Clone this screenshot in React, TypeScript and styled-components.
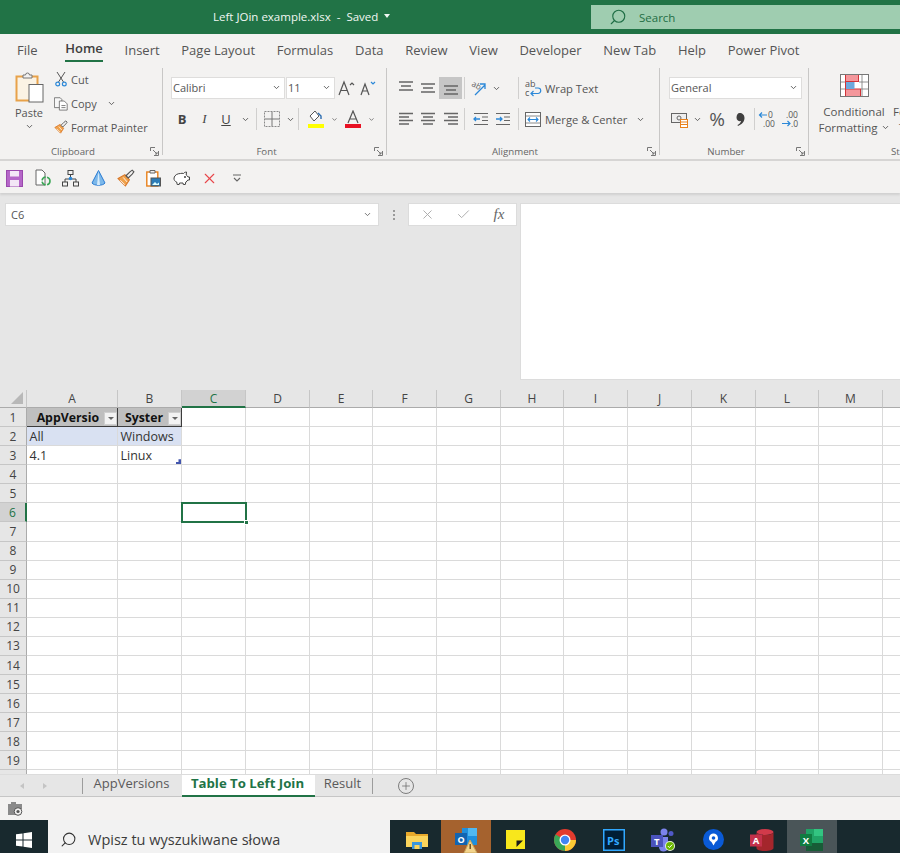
import React from "react";
import styled, { createGlobalStyle } from "styled-components";
import { ChevronDown, Check, Plus, X, Search } from "lucide-react";

const GlobalStyle = createGlobalStyle`
  html, body { margin: 0; padding: 0; background: #fff; }
  body { font-family: "Open Sans", "Noto Sans", sans-serif; color: #444; }
  * { box-sizing: border-box; }
`;

/* ---------- shell ---------- */
const Page = styled.div`
  width: 900px;
  height: 853px;
  display: flex;
  flex-direction: column;
  overflow: hidden;
`;

const TitleBar = styled.header`
  height: 34px;
  flex: none;
  background: #217346;
  display: flex;
  align-items: center;
  padding-left: 213px;
  color: #f1f7f3;
  font-size: 11.5px;
`;
const DocName = styled.span`
  white-space: pre;
  margin-bottom: 2px;
`;
const Caret = styled.span`
  width: 0;
  height: 0;
  margin: 0 0 2px 6px;
  border-left: 3.5px solid transparent;
  border-right: 3.5px solid transparent;
  border-top: 4px solid #f1f7f3;
`;
const SearchBox = styled.div`
  margin-left: auto;
  width: 309px;
  height: 24px;
  background: #9fcdb0;
  display: flex;
  align-items: center;
  gap: 12px;
  padding-left: 18px;
  color: #1f6e45;
  font-size: 11.5px;
`;
const MirrorSearch = styled(Search)`
  transform: scaleX(-1);
  flex: none;
`;

const TabBar = styled.nav`
  height: 34px;
  flex: none;
  background: #f3f2f1;
  display: flex;
  padding-left: 17px;
  gap: 21.7px;
`;
const Tab = styled.div<{ $active?: boolean }>`
  height: 29px;
  display: flex;
  align-items: center;
  padding-top: 2px;
  font-size: 13px;
  white-space: nowrap;
  color: #555;
  ${(p) => p.$active && `
    font-weight: 600;
    color: #3f3f3f;
    margin-left: 6px;
    border-bottom: 2px solid #217346;
    height: 28px;
  `}
`;

/* ---------- ribbon ---------- */
const Ribbon = styled.section`
  height: 93px;
  flex: none;
  background: #f3f2f1;
  display: flex;
  border-bottom: 2px solid #d6d5d4;
  overflow: hidden;
`;
const Group = styled.div<{ $w: number; $pad?: number; $last?: boolean }>`
  position: relative;
  flex: none;
  width: ${(p) => p.$w}px;
  height: 87px;
  padding-left: ${(p) => p.$pad ?? 0}px;
  ${(p) => !p.$last && "border-right: 1px solid #c8c7c6;"}
`;
const GroupLabel = styled.div`
  position: absolute;
  left: 0;
  right: 16px;
  bottom: -4px;
  height: 15px;
  text-align: center;
  font-size: 9.7px;
  line-height: 15px;
  color: #666;
`;
const Launcher = styled.span`
  position: absolute;
  right: 3px;
  bottom: -1px;
  display: flex;
`;
const Rows = styled.div`
  display: flex;
  flex-direction: column;
  gap: 9px;
  padding-top: 9px;
`;
const Row = styled.div`
  display: flex;
  align-items: center;
  height: 22px;
`;
const Select = styled.div<{ $w: number }>`
  width: ${(p) => p.$w}px;
  height: 22px;
  background: #fff;
  border: 1px solid #dedddc;
  display: flex;
  align-items: center;
  justify-content: space-between;
  padding: 0 3px 2px 1px;
  font-size: 11px;
  color: #555;
  margin-right: 1px;
`;
const Btn = styled.div<{ $w: number; $on?: boolean }>`
  flex: none;
  width: ${(p) => p.$w}px;
  height: 22px;
  display: flex;
  align-items: center;
  justify-content: center;
  background: ${(p) => (p.$on ? "#c6c6c6" : "transparent")};
`;
const VSep = styled.i`
  flex: none;
  width: 1px;
  height: 22px;
  margin: 0 2px;
  background: #d0cfce;
`;
const BtnText = styled.span`
  font-size: 11.2px;
  color: #555;
  white-space: nowrap;
`;
const BoldMark = styled.b`
  font-size: 13px;
`;
const ItalicMark = styled.i`
  font-size: 13px;
  font-family: "Liberation Serif", serif;
`;
const UnderMark = styled.u`
  font-size: 13px;
`;
const Percent = styled.span`
  font-size: 19px;
  color: #555;
`;

const ClipboardBody = styled.div`
  display: flex;
  padding: 4px 0 0 13px;
`;
const PasteColumn = styled.div`
  width: 32px;
  display: flex;
  flex-direction: column;
  align-items: center;
  font-size: 11px;
  color: #555;
  gap: 2px;
`;
const ClipColumn = styled.div`
  margin: -5px 0 0 9px;
  display: flex;
  flex-direction: column;
`;
const ClipRow = styled.div`
  height: 24px;
  display: flex;
  align-items: center;
  gap: 3px;
  font-size: 11px;
  color: #555;
`;
const BigButton = styled.div`
  padding: 6px 0 0 10px;
  display: flex;
  flex-direction: column;
  align-items: center;
  width: 80px;
  font-size: 11.5px;
  line-height: 16px;
  color: #555;
  gap: 7px;
`;
const BigText = styled.div`
  text-align: center;
  white-space: nowrap;
`;
const CutOff = styled.div`
  padding: 36px 0 0 2px;
  font-size: 11.5px;
  line-height: 16px;
  color: #555;
  white-space: pre;
`;
const CutLabel = styled.div`
  position: absolute;
  left: 82px;
  bottom: -4px;
  font-size: 9.7px;
  line-height: 15px;
  color: #666;
`;

/* ---------- quick access ---------- */
const Qat = styled.div`
  height: 32px;
  flex: none;
  background: #f3f2f1;
  display: flex;
  align-items: center;
  padding: 2px 0 0 1px;
  box-shadow: 0 2px 2px #d0d0d0;
  position: relative;
`;
const QatItem = styled.span`
  width: 27.8px;
  flex: none;
  display: flex;
  justify-content: center;
`;

/* ---------- formula region ---------- */
const FormulaRegion = styled.div`
  height: 197px;
  flex: none;
  background: #e6e6e6;
  display: flex;
  padding-top: 10px;
  padding-left: 5px;
`;
const NameBox = styled.div`
  width: 374px;
  height: 23px;
  background: #fff;
  border: 1px solid #dcdcdc;
  display: flex;
  align-items: center;
  justify-content: space-between;
  padding: 0 6px 0 5px;
  font-size: 11px;
  color: #555;
`;
const Dots = styled.div`
  width: 29px;
  height: 23px;
  display: flex;
  flex-direction: column;
  align-items: center;
  justify-content: center;
  gap: 2px;
  & > i { width: 2px; height: 2px; background: #9a9a9a; }
`;
const FxBox = styled.div`
  width: 109px;
  height: 23px;
  background: #fff;
  border: 1px solid #dcdcdc;
  display: flex;
  align-items: center;
`;
const Fx = styled.span`
  font-family: "Liberation Serif", serif;
  font-style: italic;
  font-size: 15px;
  color: #666;
`;
const FormulaInput = styled.div`
  margin-left: 3px;
  width: 380px;
  height: 177px;
  background: #fff;
  border: 1px solid #dcdcdc;
  border-right: 0;
`;

/* ---------- sheet ---------- */
const COLS = [
  { n: "A", w: 91 }, { n: "B", w: 64 }, { n: "C", w: 64 }, { n: "D", w: 64 }, { n: "E", w: 63 },
  { n: "F", w: 64 }, { n: "G", w: 64 }, { n: "H", w: 63 }, { n: "I", w: 64 }, { n: "J", w: 64 },
  { n: "K", w: 64 }, { n: "L", w: 63 }, { n: "M", w: 64 }, { n: "", w: 18 },
];

const Sheet = styled.div`
  height: 384px;
  flex: none;
  overflow: hidden;
  background: #fff;
  display: grid;
  grid-template-columns: 27px ${COLS.map((c) => c.w + "px").join(" ")};
  grid-template-rows: 18px repeat(20, 19.08px);
`;
const Corner = styled.div`
  background: #e6e6e6;
  border-right: 1px solid #c6c6c6;
  border-bottom: 1px solid #ababab;
  position: relative;
  &::after {
    content: "";
    position: absolute;
    right: 3px;
    bottom: 3px;
    border-style: solid;
    border-width: 0 0 12px 12px;
    border-color: transparent transparent #b8b8b8 transparent;
  }
`;
const ColHead = styled.div<{ $sel?: boolean }>`
  background: ${(p) => (p.$sel ? "#d2d2d2" : "#e6e6e6")};
  color: ${(p) => (p.$sel ? "#217346" : "#444")};
  border-right: 1px solid #c6c6c6;
  border-bottom: ${(p) => (p.$sel ? "2px solid #217346" : "1px solid #ababab")};
  display: flex;
  align-items: center;
  justify-content: center;
  font-size: 12px;
`;
const RowHead = styled.div<{ $sel?: boolean }>`
  background: ${(p) => (p.$sel ? "#d2d2d2" : "#e6e6e6")};
  color: ${(p) => (p.$sel ? "#217346" : "#444")};
  border-right: ${(p) => (p.$sel ? "2px solid #217346" : "1px solid #ababab")};
  border-bottom: 1px solid #c6c6c6;
  display: flex;
  align-items: center;
  justify-content: center;
  font-size: 12px;
`;
const Cell = styled.div<{ $kind?: "head" | "band"; $sel?: boolean }>`
  position: relative;
  border-right: 1px solid #dadada;
  border-bottom: 1px solid #dadada;
  padding: 1px 0 0 2.5px;
  display: flex;
  align-items: center;
  font-size: 12.5px;
  white-space: nowrap;
  overflow: ${(p) => (p.$sel ? "visible" : "hidden")};
  color: #333;
  ${(p) => p.$kind === "head" && `
    background: #bfbfbf;
    border-right: 1px solid #3c3c3c;
    border-bottom: 1px solid #3c3c3c;
    font-size: 12.3px;
    font-weight: 700;
    color: #111;
    justify-content: flex-end;
    padding-right: 18px;
  `}
  ${(p) => p.$kind === "band" && "background: #d9e1f2;"}
  ${(p) => p.$sel && `
    outline: 2px solid #217346;
    outline-offset: -1px;
    z-index: 2;
  `}
`;
const FilterBtn = styled.span`
  position: absolute;
  right: 0;
  top: 4px;
  width: 13px;
  height: 13px;
  background: #f3f3f3;
  border: 1px solid #d0d0d0;
  display: flex;
  align-items: center;
  justify-content: center;
  &::after {
    content: "";
    border-left: 3px solid transparent;
    border-right: 3px solid transparent;
    border-top: 3px solid #666;
  }
`;
const ResizeMark = styled.span`
  position: absolute;
  right: 0;
  bottom: 0;
  width: 5px;
  height: 5px;
  background: #4356ad;
  clip-path: polygon(100% 0, 100% 100%, 0 100%, 0 55%, 50% 55%, 50% 0);
`;
const FillHandle = styled.span`
  position: absolute;
  right: -4px;
  bottom: -4px;
  box-sizing: content-box;
  width: 3px;
  height: 3px;
  background: #217346;
  border: 1px solid #fff;
`;

/* ---------- tabs + status ---------- */
const SheetTabs = styled.div`
  height: 23px;
  flex: none;
  background: #e6e6e6;
  border-bottom: 1px solid #c6c6c6;
  border-top: 1px solid #dcdcdc;
  display: flex;
  align-items: stretch;
  padding-left: 20px;
`;
const Arrow = styled.span<{ $dir: "l" | "r" }>`
  align-self: center;
  width: 0;
  height: 0;
  margin-right: 19px;
  border-top: 3.5px solid transparent;
  border-bottom: 3.5px solid transparent;
  ${(p) => (p.$dir === "l" ? "border-right: 4px solid #c4c4c4;" : "border-left: 4px solid #c4c4c4;")}
`;
const TabDivider = styled.i<{ $gap?: number }>`
  align-self: center;
  width: 1px;
  height: 16px;
  margin-left: ${(p) => p.$gap ?? 0}px;
  background: #9c9c9c;
`;
const SheetTab = styled.div<{ $active?: boolean; $w: number }>`
  width: ${(p) => p.$w}px;
  display: flex;
  align-items: center;
  justify-content: center;
  padding: 0 2px 5px 0;
  font-size: 13px;
  white-space: nowrap;
  color: #5a5a5a;
  ${(p) => p.$active && `
    background: #fff;
    color: #217346;
    font-size: 13.2px;
    font-weight: 700;
    border-bottom: 2px solid #217346;
    margin-bottom: -1px;
    padding-bottom: 4px;
  `}
`;
const AddSheet = styled.span`
  align-self: center;
  margin-left: 25px;
  width: 16px;
  height: 16px;
  border: 1px solid #7d7d7d;
  border-radius: 50%;
  display: flex;
  align-items: center;
  justify-content: center;
  color: #6a6a6a;
`;
const StatusBar = styled.div`
  height: 23px;
  flex: none;
  background: #f3f2f1;
  display: flex;
  align-items: center;
  padding-left: 8px;
`;

/* ---------- windows taskbar ---------- */
const Taskbar = styled.footer`
  height: 33px;
  flex: none;
  background: #18292e;
  display: flex;
  align-items: stretch;
`;
const StartBtn = styled.div`
  width: 48px;
  padding-top: 6px;
  display: flex;
  align-items: center;
  justify-content: center;
`;
const WinSearch = styled.div`
  width: 342px;
  background: #f2f2f2;
  display: flex;
  align-items: center;
  padding: 6px 0 0 12px;
  gap: 11px;
  font-size: 14.5px;
  color: #3c3c3c;
`;
const TaskItem = styled.div<{ $bg?: string }>`
  width: 49.4px;
  flex: none;
  padding-top: 6px;
  display: flex;
  align-items: center;
  justify-content: center;
  background: ${(p) => p.$bg ?? "transparent"};
`;
const TaskList = styled.div`
  display: flex;
  padding-left: 2px;
`;

/* ---------- icons ---------- */
const Chev = ({ s = 9, c = "#555" }: { s?: number; c?: string }) => (
  <ChevronDown size={s} color={c} strokeWidth={2.4} />
);
const LauncherIcon = () => (
  <svg width="9" height="9" viewBox="0 0 9 9" fill="none" stroke="#777">
    <path d="M8.5 4V8.5H4M.5 4V.5H5M3 3l4 4M7 5v2H5" />
  </svg>
);
const AlignV = ({ y }: { y: number }) => (
  <svg width="16" height="16" viewBox="0 0 16 16" stroke="#666" strokeWidth="1.3">
    <path d={`M1 ${y}h14M3 ${y + 4}h10M1 ${y + 8}h14`} />
  </svg>
);
const AlignH = ({ a }: { a: "l" | "c" | "r" }) => {
  const x = (w: number) => (a === "l" ? 1 : a === "c" ? (16 - w) / 2 : 15 - w);
  return (
    <svg width="16" height="14" viewBox="0 0 16 14" stroke="#666" strokeWidth="1.3">
      <path d={`M1 1.5h14M${x(10)} 5h10M1 8.5h14M${x(10)} 12h10`} />
    </svg>
  );
};
const Indent = ({ flip }: { flip?: boolean }) => (
  <svg width="16" height="14" viewBox="0 0 16 14" fill="none">
    <path d="M1 1.5h14M9 5h6M9 8.5h6M1 12.5h14" stroke="#666" strokeWidth="1.2" />
    <path d={flip ? "M1 7h6M5 5l2 2-2 2" : "M7 7H1M3 5 1 7l2 2"} stroke="#2b88d8" strokeWidth="1.3" />
  </svg>
);
const PasteIcon = () => (
  <svg width="29" height="31" viewBox="0 0 29 31" fill="none">
    <rect x="1.5" y="4.5" width="21" height="24" fill="#fbf3e4" stroke="#e8a24a" strokeWidth="2" />
    <path d="M8 5V3h2.5a2 2 0 0 1 4 0H17v3H8z" fill="#f3f2f1" stroke="#777" />
    <rect x="14" y="12.5" width="14" height="17.5" fill="#fff" stroke="#666" />
  </svg>
);
const CutIcon = () => (
  <svg width="12" height="16" viewBox="0 0 12 16" fill="none">
    <path d="M2 1l6.5 10M10 1 3.5 11" stroke="#555" />
    <circle cx="2.7" cy="13" r="1.9" stroke="#2b88d8" strokeWidth="1.2" />
    <circle cx="9.3" cy="13" r="1.9" stroke="#2b88d8" strokeWidth="1.2" />
  </svg>
);
const CopyIcon = () => (
  <svg width="17" height="17" viewBox="0 0 17 17" fill="#f7f7f7" stroke="#666">
    <path d="M.5 1.500h7l2 2v10h-9z" />
    <path d="M6.500 5.500h6l3.500 3.500v7.500H6.500z" fill="#fff" />
    <path d="M9 11h5M9 13.500h5" />
  </svg>
);
const BrushIcon = ({ s = 16 }: { s?: number }) => (
  <svg width={s} height={s} viewBox="0 0 16 16" fill="none">
    <path d="M1 8.500 7 5l4 4.500-3.500 5.500z" fill="#f0a14a" stroke="#d9782a" />
    <path d="M3 10l4 4M5.500 7.500l3.500 4" stroke="#fff" strokeWidth=".8" />
    <path d="m8 6 3.500-3.500 2-1.500 1.500 1.500-1.500 2L10 8z" fill="#f3f2f1" stroke="#555" />
  </svg>
);
const ABtn = ({ up }: { up: boolean }) => (
  <svg width="17" height="16" viewBox="0 0 17 16" fill="none">
    <path d={up ? "M1 15 6 2l5 13M3 10.500h6" : "M2 15 6 4l4 11M3.600 11h5"} stroke="#555" strokeWidth="1.2" />
    <path d={up ? "m12 5 2-2 2 2" : "m12 2 2 2 2-2"} stroke={up ? "#555" : "#2b88d8"} strokeWidth="1.2" />
  </svg>
);
const BorderIcon = () => (
  <svg width="16" height="16" viewBox="0 0 16 16" fill="none" stroke="#8a8a8a">
    <rect x=".5" y=".5" width="15" height="15" strokeDasharray="2 1" />
    <path d="M8 1v14M1 8h14" stroke="#777" />
  </svg>
);
const FillIcon = () => (
  <svg width="18" height="18" viewBox="0 0 18 18" fill="none">
    <path d="M8 1 3 6l4 5 5-5z" fill="#fff" stroke="#555" />
    <path d="M11 3l3 3v3" stroke="#2b6cb0" strokeWidth="1.4" />
    <rect x="1" y="14" width="16" height="4" fill="#ffff00" />
  </svg>
);
const ColorA = () => (
  <svg width="18" height="18" viewBox="0 0 18 18" fill="none">
    <path d="M4 13 9 1l5 12M6 9h6" stroke="#555" strokeWidth="1.2" />
    <rect x="1" y="14" width="16" height="4" fill="#e81123" />
  </svg>
);
const OrientIcon = () => (
  <svg width="20" height="18" viewBox="0 0 20 18" fill="none">
    <text x="3" y="9" fontSize="8" fill="#666" fontFamily="Open Sans" transform="rotate(30 7 6)">ab</text>
    <path d="m6 16 10-10M11 5h5v5" stroke="#2b88d8" strokeWidth="1.3" />
  </svg>
);
const WrapIcon = () => (
  <svg width="18" height="20" viewBox="0 0 18 20" fill="none">
    <text x="1" y="9" fontSize="9" fill="#555" fontFamily="Open Sans">ab</text>
    <text x="1" y="18" fontSize="9" fill="#555" fontFamily="Open Sans">c</text>
    <path d="M11 10h3a2.500 2.500 0 0 1 0 5.500H7M9.500 13 7 15.500 9.500 18" stroke="#2b88d8" strokeWidth="1.2" />
  </svg>
);
const MergeIcon = () => (
  <svg width="16" height="15" viewBox="0 0 16 15" fill="none">
    <rect x=".5" y=".5" width="15" height="14" fill="#fff" stroke="#666" />
    <path d="M1 4h14M1 11h14" stroke="#888" />
    <path d="M3 7.500h10M5 5.500 3 7.500l2 2M11 5.500l2 2-2 2" stroke="#2b88d8" strokeWidth="1.1" />
  </svg>
);
const CurrencyIcon = () => (
  <svg width="17" height="17" viewBox="0 0 17 17" fill="none">
    <rect x=".5" y="2.500" width="15" height="9" fill="#eee" stroke="#666" />
    <circle cx="8" cy="7" r="2" stroke="#666" />
    <rect x="9.500" y="8.500" width="7" height="8" fill="#fff" stroke="#e8801a" />
    <path d="M9.500 11h7M9.500 13.500h7" stroke="#e8801a" />
  </svg>
);
const CommaIcon = () => (
  <svg width="9" height="13" viewBox="0 0 9 13">
    <path d="M3.500 0C6.500 0 8.500 2 8.500 5c0 3.500-2.500 6.500-6.500 8l-.5-1c2-1 3.300-2.500 3.500-4-1.500.5-4.500 0-4.500-3.500C.5 2 2 0 3.500 0z" fill="#3f3f3f" />
  </svg>
);
const Decimal = ({ inc }: { inc?: boolean }) => (
  <svg width="20" height="20" viewBox="0 0 20 20" fill="none">
    <text x={inc ? 5 : 10} y="9" fontSize="8.500" fill="#555" fontFamily="Open Sans">{inc ? ".00" : "0"}</text>
    <text x={inc ? 10 : 5} y="18" fontSize="8.500" fill="#555" fontFamily="Open Sans">{inc ? ".0" : ".00"}</text>
    <path d={inc ? "M1 14.500h8M6.500 12 9 14.500 6.500 17" : "M1 6h8M4 3.500 1.500 6 4 8.500"} stroke="#2b88d8" strokeWidth="1.2" />
  </svg>
);
const CondIcon = () => (
  <svg width="29" height="23" viewBox="0 0 29 23" fill="none">
    <rect x=".5" y=".5" width="28" height="22" fill="#fff" />
    <rect x="5.500" y=".5" width="13" height="7" fill="#f4979c" stroke="#d13438" />
    <rect x="5.500" y="15" width="15" height="7.500" fill="#f4979c" stroke="#d13438" />
    <rect x="5.500" y="8" width="9" height="7" fill="#6ea8dc" />
    <path d="M5.500 8v7" stroke="#d13438" />
    <rect x=".5" y=".5" width="28" height="22" stroke="#777" />
    <path d="M1 8h4M19 8h9M1 15h4M21 15h7M22 1v21" stroke="#777" strokeWidth=".8" />
  </svg>
);

/* quick access icons */
const SaveIcon = () => (
  <svg width="17" height="17" viewBox="0 0 17 17">
    <rect x=".5" y=".5" width="16" height="16" fill="#b566c8" stroke="#9a49ad" />
    <rect x="4" y="1" width="9" height="5.500" fill="#f3e6f6" />
    <rect x="4" y="10" width="9" height="6.500" fill="#f3e6f6" />
  </svg>
);
const RefreshDoc = () => (
  <svg width="16" height="18" viewBox="0 0 16 18" fill="none">
    <path d="M1 1h6l3 3v12H1z" fill="#fff" stroke="#666" />
    <circle cx="11" cy="12" r="4" stroke="#3aa655" strokeWidth="1.6" strokeDasharray="5 1.500" />
  </svg>
);
const OrgIcon = () => (
  <svg width="17" height="17" viewBox="0 0 17 17" fill="none" stroke="#444">
    <rect x="6" y=".5" width="5" height="4" />
    <rect x=".5" y="12" width="5" height="4" />
    <rect x="11.500" y="12" width="5" height="4" />
    <path d="M8.500 5v4M3 12V9h11v3" />
    <circle cx="8.500" cy="8.500" r="1.800" fill="#2b88d8" stroke="none" />
  </svg>
);
const ConeIcon = () => (
  <svg width="15" height="16" viewBox="0 0 15 16">
    <path d="M7.500 .5 14 13c-2 3-11 3-13 0z" fill="#7cb8ea" stroke="#2b7cd3" />
    <path d="M7.500 1 9 15H6z" fill="#d7ebfa" />
  </svg>
);
const PasteImg = () => (
  <svg width="15" height="18" viewBox="0 0 15 18" fill="none">
    <rect x=".8" y="3" width="11" height="14" fill="#fff" stroke="#e8801a" strokeWidth="1.4" />
    <path d="M4 4V1.500h5V4z" fill="#f3f2f1" stroke="#666" />
    <rect x="5" y="9" width="9.500" height="8" fill="#2b7cb8" stroke="#555" />
    <path d="m6 16 3-3 2 2 2-1.500V16z" fill="#dff" />
  </svg>
);
const PigIcon = () => (
  <svg width="17" height="15" viewBox="0 0 17 15" fill="none" stroke="#444">
    <path d="M1 7c.5-3 3.500-4.500 6.500-4.500 1-.3 2-.3 3 0 .7-1 2-1.500 3-1.500l-.3 3c1 .6 1.500 1.300 1.800 2h1.500v3h-1.700c-.4.800-1 1.500-2 2l-.5 2.500h-2l-.3-1.500H6.500l-.3 1.500h-2l-.5-2.500C2 10.500.8 9 1 7z" fill="#fff" />
    <circle cx="12" cy="6" r=".6" fill="#444" />
  </svg>
);
const OverflowIcon = () => (
  <svg width="10" height="9" viewBox="0 0 10 9" fill="none" stroke="#666" strokeWidth="1.1">
    <path d="M1 1h8M2 4l3 3 3-3" />
  </svg>
);

/* taskbar icons */
const WinLogo = () => (
  <svg width="16" height="16" viewBox="0 0 16 16" fill="#fff">
    <path d="M0 2.300 6.500 1.400V7.500H0zM7.500 1.300 16 0V7.500H7.500zM0 8.500h6.500v6.100L0 13.700zM7.500 8.500H16V16l-8.500-1.300z" />
  </svg>
);
const FolderIcon = () => (
  <svg width="22" height="18" viewBox="0 0 22 18">
    <path d="M0 1h8l2 2h12v13H0z" fill="#e8a92c" />
    <rect y="5" width="22" height="11" fill="#fbd45c" />
    <rect x="6" y="11" width="10" height="7" fill="#3a96dd" />
    <rect x="8.500" y="14" width="5" height="4" fill="#fbd45c" />
  </svg>
);
const OutlookIcon = () => (
  <svg width="24" height="26" viewBox="0 0 24 26">
    <rect x="8" y="1" width="15" height="17" fill="#1f8fdc" />
    <rect x="14" y="1" width="9" height="8" fill="#50b8f0" />
    <rect x="1" y="6" width="12" height="12" fill="#1264b0" />
    <text x="3.500" y="15.500" fontSize="9" fill="#fff" fontFamily="Open Sans" fontWeight="700">O</text>
    <path d="M16 13l7 13H10z" fill="#f3d48c" stroke="#c9a45a" />
    <rect x="15.500" y="17" width="1.400" height="5" fill="#6b4a16" />
  </svg>
);
const StickyIcon = () => (
  <svg width="19" height="19" viewBox="0 0 19 19">
    <rect width="19" height="19" fill="#f8e71c" />
    <path d="M17 10.500 10.500 17v-6.500z" fill="#1a1a1a" />
  </svg>
);
const ChromeIcon = () => (
  <svg width="22" height="22" viewBox="0 0 22 22">
    <circle cx="11" cy="11" r="11" fill="#e33b2e" />
    <path d="M11 11h11a11 11 0 0 1-11 11z" fill="#fcc934" />
    <path d="M11 11 1.500 5.500A11 11 0 0 0 11 22z" fill="#3aa757" />
    <circle cx="11" cy="11" r="5.500" fill="#fff" />
    <circle cx="11" cy="11" r="4.200" fill="#4285f4" />
  </svg>
);
const PsIcon = () => (
  <svg width="22" height="22" viewBox="0 0 22 22">
    <rect x=".75" y=".75" width="20.500" height="20.500" fill="#001e36" stroke="#31a8ff" strokeWidth="1.500" />
    <text x="4" y="15.500" fontSize="11" fontWeight="700" fill="#31a8ff" fontFamily="Open Sans">Ps</text>
  </svg>
);
const TeamsIcon = () => (
  <svg width="25" height="24" viewBox="0 0 25 24">
    <circle cx="13" cy="4" r="3.500" fill="#7b83eb" />
    <circle cx="20" cy="5.500" r="2.500" fill="#5059c9" />
    <path d="M8 9h9v10a4 4 0 0 1-9 0z" fill="#7b83eb" />
    <rect y="7" width="12" height="12" fill="#4b53bc" />
    <text x="3" y="16.500" fontSize="9.500" fontWeight="700" fill="#fff" fontFamily="Open Sans">T</text>
    <circle cx="19" cy="18" r="5" fill="#e6f4d7" />
    <circle cx="19" cy="18" r="4" fill="#6bb700" />
    <path d="m16.800 18 1.600 1.600 2.800-3" stroke="#fff" fill="none" />
  </svg>
);
const MapsIcon = () => (
  <svg width="21" height="21" viewBox="0 0 21 21">
    <circle cx="10.500" cy="10.500" r="10.500" fill="#0a5ad6" />
    <path d="M10.500 4.500a4.500 4.500 0 0 0-2 8.500l2 3.500 2-3.500a4.500 4.500 0 0 0-2-8.500z" fill="#fff" />
    <circle cx="10.500" cy="9" r="1.800" fill="#0a5ad6" />
  </svg>
);
const AccessIcon = () => (
  <svg width="24" height="24" viewBox="0 0 24 24">
    <ellipse cx="15" cy="4" rx="8.500" ry="3" fill="#d13a4a" />
    <path d="M6.500 4v16c0 4 17 4 17 0V4c0 4-17 4-17 0z" fill="#a4262c" />
    <rect y="6.500" width="12" height="12" fill="#c4314b" />
    <text x="2.800" y="16" fontSize="9.500" fontWeight="700" fill="#fff" fontFamily="Open Sans">A</text>
  </svg>
);
const ExcelIcon = () => (
  <svg width="23" height="22" viewBox="0 0 23 22">
    <rect x="6" y="0" width="17" height="22" fill="#21a366" />
    <rect x="14" y="0" width="9" height="7" fill="#33c481" />
    <rect x="6" y="14" width="17" height="8" fill="#185c37" />
    <rect x="0" y="5" width="12" height="12" fill="#107c41" />
    <text x="2.800" y="14.500" fontSize="9.500" fontWeight="700" fill="#fff" fontFamily="Open Sans">X</text>
  </svg>
);
const CameraIcon = () => (
  <svg width="15" height="14" viewBox="0 0 15 14" fill="none">
    <path d="M0 2h3V0h5v2h6v5H8v6H0z" fill="#8a8a8a" />
    <circle cx="10" cy="9.500" r="3.800" fill="#f3f2f1" stroke="#555" />
    <circle cx="10" cy="9.500" r="1.600" fill="#555" />
  </svg>
);

const cellText: Record<string, string> = { A2: "All", B2: "Windows", A3: "4.1", B3: "Linux" };

export default function App() {
  return (
    <Page>
      <GlobalStyle />
      <TitleBar>
        <DocName>Left JOin example.xlsx  -  Saved</DocName>
        <Caret />
        <SearchBox>
          <MirrorSearch size={18} color="#1f6e45" strokeWidth={1.5} />
          Search
        </SearchBox>
      </TitleBar>

      <TabBar>
        {["File", "Home", "Insert", "Page Layout", "Formulas", "Data", "Review", "View", "Developer", "New Tab", "Help", "Power Pivot"].map((t) => (
          <Tab key={t} $active={t === "Home"}>{t}</Tab>
        ))}
      </TabBar>

      <Ribbon>
        <Group $w={163}>
          <ClipboardBody>
            <PasteColumn>
              <PasteIcon />
              <span>Paste</span>
              <Chev />
            </PasteColumn>
            <ClipColumn>
              <ClipRow><Btn $w={14}><CutIcon /></Btn>Cut</ClipRow>
              <ClipRow>
                <Btn $w={14}><CopyIcon /></Btn>Copy<Btn $w={24}><Chev /></Btn>
              </ClipRow>
              <ClipRow><Btn $w={14}><BrushIcon /></Btn>Format Painter</ClipRow>
            </ClipColumn>
          </ClipboardBody>
          <GroupLabel>Clipboard</GroupLabel>
          <Launcher><LauncherIcon /></Launcher>
        </Group>

        <Group $w={224} $pad={8}>
          <Rows>
            <Row>
              <Select $w={114}>Calibri<Chev /></Select>
              <Select $w={49}>11<Chev /></Select>
              <Btn $w={20}><ABtn up /></Btn>
              <Btn $w={22}><ABtn up={false} /></Btn>
            </Row>
            <Row>
              <Btn $w={22}><BoldMark>B</BoldMark></Btn>
              <Btn $w={23}><ItalicMark>I</ItalicMark></Btn>
              <Btn $w={20}><UnderMark>U</UnderMark></Btn>
              <Btn $w={18}><Chev /></Btn>
              <VSep />
              <Btn $w={25}><BorderIcon /></Btn>
              <Btn $w={12}><Chev /></Btn>
              <VSep />
              <Btn $w={30}><FillIcon /></Btn>
              <Btn $w={7}><Chev /></Btn>
              <Btn $w={30}><ColorA /></Btn>
              <Btn $w={7}><Chev /></Btn>
            </Row>
          </Rows>
          <GroupLabel>Font</GroupLabel>
          <Launcher><LauncherIcon /></Launcher>
        </Group>

        <Group $w={273} $pad={8}>
          <Rows>
            <Row>
              <Btn $w={22}><AlignV y={2} /></Btn>
              <Btn $w={22}><AlignV y={4} /></Btn>
              <Btn $w={23} $on><AlignV y={6} /></Btn>
              <VSep />
              <Btn $w={24}><OrientIcon /></Btn>
              <Btn $w={11}><Chev /></Btn>
              <Btn $w={14} />
              <VSep />
              <Btn $w={24}><WrapIcon /></Btn>
              <BtnText>Wrap Text</BtnText>
            </Row>
            <Row>
              <Btn $w={22}><AlignH a="l" /></Btn>
              <Btn $w={22}><AlignH a="c" /></Btn>
              <Btn $w={23}><AlignH a="r" /></Btn>
              <VSep />
              <Btn $w={28}><Indent /></Btn>
              <Btn $w={16}><Indent flip /></Btn>
              <Btn $w={5} />
              <VSep />
              <Btn $w={24}><MergeIcon /></Btn>
              <BtnText>Merge &amp; Center</BtnText>
              <Btn $w={26}><Chev /></Btn>
            </Row>
          </Rows>
          <GroupLabel>Alignment</GroupLabel>
          <Launcher><LauncherIcon /></Launcher>
        </Group>

        <Group $w={149} $pad={9}>
          <Rows>
            <Row><Select $w={133}>General<Chev /></Select></Row>
            <Row>
              <Btn $w={20}><CurrencyIcon /></Btn>
              <Btn $w={16}><Chev /></Btn>
              <Btn $w={24}><Percent>%</Percent></Btn>
              <Btn $w={23}><CommaIcon /></Btn>
              <VSep />
              <Btn $w={22}><Decimal /></Btn>
              <Btn $w={23}><Decimal inc /></Btn>
            </Row>
          </Rows>
          <GroupLabel>Number</GroupLabel>
          <Launcher><LauncherIcon /></Launcher>
        </Group>

        <Group $w={82} $last>
          <BigButton>
            <CondIcon />
            <BigText>Conditional<br />Formatting <Chev /></BigText>
          </BigButton>
          <CutLabel>St</CutLabel>
        </Group>
        <CutOff>{"Fo\n  T"}</CutOff>
      </Ribbon>

      <Qat>
        <QatItem><SaveIcon /></QatItem>
        <QatItem><RefreshDoc /></QatItem>
        <QatItem><OrgIcon /></QatItem>
        <QatItem><ConeIcon /></QatItem>
        <QatItem><BrushIcon s={18} /></QatItem>
        <QatItem><PasteImg /></QatItem>
        <QatItem><PigIcon /></QatItem>
        <QatItem><X size={17} color="#e8464a" strokeWidth={1.5} /></QatItem>
        <QatItem><OverflowIcon /></QatItem>
      </Qat>

      <FormulaRegion>
        <NameBox>C6<Chev c="#666" /></NameBox>
        <Dots><i /><i /><i /></Dots>
        <FxBox>
          <Btn $w={36}><X size={15} color="#aaa" strokeWidth={1.5} /></Btn>
          <Btn $w={36}><Check size={15} color="#aaa" strokeWidth={1.5} /></Btn>
          <Btn $w={36}><Fx>fx</Fx></Btn>
        </FxBox>
        <FormulaInput />
      </FormulaRegion>

      <Sheet>
        <Corner />
        {COLS.map((c, i) => (
          <ColHead key={i} $sel={c.n === "C"}>{c.n}</ColHead>
        ))}
        {Array.from({ length: 20 }, (_, r) => (
          <React.Fragment key={r}>
            <RowHead $sel={r + 1 === 6}>{r + 1}</RowHead>
            {COLS.map((c, i) => {
              const id = c.n + (r + 1);
              if (r === 0 && c.n === "A") return <Cell key={i} $kind="head">AppVersio<FilterBtn /></Cell>;
              if (r === 0 && c.n === "B") return <Cell key={i} $kind="head">Syster<FilterBtn /></Cell>;
              return (
                <Cell key={i} $kind={r === 1 && i < 2 ? "band" : undefined} $sel={id === "C6"}>
                  {cellText[id]}
                  {id === "B3" && <ResizeMark />}
                  {id === "C6" && <FillHandle />}
                </Cell>
              );
            })}
          </React.Fragment>
        ))}
      </Sheet>

      <SheetTabs>
        <Arrow $dir="l" />
        <Arrow $dir="r" />
        <TabDivider $gap={16} />
        <SheetTab $w={99}>AppVersions</SheetTab>
        <SheetTab $w={133} $active>Table To Left Join</SheetTab>
        <SheetTab $w={57}>Result</SheetTab>
        <TabDivider />
        <AddSheet><Plus size={12} strokeWidth={1.5} /></AddSheet>
      </SheetTabs>

      <StatusBar><CameraIcon /></StatusBar>

      <Taskbar>
        <StartBtn><WinLogo /></StartBtn>
        <WinSearch>
          <MirrorSearch size={17} color="#333" strokeWidth={1.5} />
          Wpisz tu wyszukiwane słowa
        </WinSearch>
        <TaskList>
          <TaskItem><FolderIcon /></TaskItem>
          <TaskItem $bg="#a5622e"><OutlookIcon /></TaskItem>
          <TaskItem><StickyIcon /></TaskItem>
          <TaskItem><ChromeIcon /></TaskItem>
          <TaskItem><PsIcon /></TaskItem>
          <TaskItem><TeamsIcon /></TaskItem>
          <TaskItem><MapsIcon /></TaskItem>
          <TaskItem><AccessIcon /></TaskItem>
          <TaskItem $bg="#4a5558"><ExcelIcon /></TaskItem>
        </TaskList>
      </Taskbar>
    </Page>
  );
}
